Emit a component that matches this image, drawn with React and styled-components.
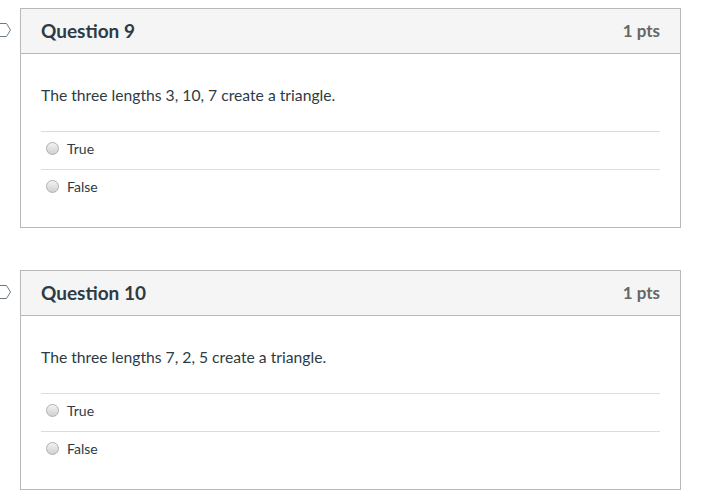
import React from 'react';
import styled, { createGlobalStyle } from 'styled-components';

const GlobalStyle = createGlobalStyle`
  html, body {
    margin: 0;
    padding: 0;
    background: #fff;
    font-family: Lato, "Open Sans", sans-serif;
    color: #2d3b45;
  }
`;

const Page = styled.div`
  padding: 8px 20px 0 20px;
  width: 661px;
  display: flex;
  flex-direction: column;
  gap: 42px;
`;

const QuestionWrap = styled.div`
  position: relative;
`;

// flag marker peeking in from the left edge
const FlagIcon = styled.svg`
  position: absolute;
  left: -20px;
  top: 14px;
`;

const Card = styled.div`
  border: 1px solid #b8b8b8;
  background: #fff;
`;

const Header = styled.div`
  display: flex;
  align-items: center;
  justify-content: space-between;
  height: 44px;
  padding: 0 20px;
  background: #f5f5f5;
  border-bottom: 1px solid #b8b8b8;
`;

const Title = styled.div`
  font-size: 19px;
  line-height: 24px;
  font-weight: 700;
  color: #2d3b45;
`;

const Points = styled.div`
  font-size: 17px;
  line-height: 22px;
  font-weight: 700;
  color: #666;
`;

const Body = styled.div`
  padding: 30px 20px 20px 20px;
`;

const Prompt = styled.div`
  font-size: 15.7px;
  line-height: 22px;
  margin-bottom: 25px;
`;

const Answer = styled.label`
  display: flex;
  align-items: center;
  box-sizing: border-box;
  height: 38px;
  border-top: 1px solid #dcdcdc;
  padding-left: 5px;
  padding-bottom: 4px;
  font-size: 14px;
  color: #2d3b45;
`;

const Radio = styled.span`
  width: 11px;
  height: 11px;
  border-radius: 50%;
  border: 1px solid #b0b0b0;
  background: linear-gradient(#f2f2f2, #d0d0d0);
  margin-right: 8px;
`;

const questions = [
  { n: 9, text: 'The three lengths 3, 10, 7 create a triangle.' },
  { n: 10, text: 'The three lengths 7, 2, 5 create a triangle.' },
];

const App = () => (
  <>
    <GlobalStyle />
    <Page>
      {questions.map(q => (
        <QuestionWrap key={q.n}>
          <FlagIcon width="14" height="16" viewBox="0 0 14 16">
            <path d="M-4 1.5 H6.5 L10.5 8 L6.5 14.5 H-4" fill="none" stroke="#6b7b88" strokeWidth="1" />
          </FlagIcon>
          <Card>
            <Header>
              <Title>Question {q.n}</Title>
              <Points>1 pts</Points>
            </Header>
            <Body>
              <Prompt>{q.text}</Prompt>
              <Answer><Radio />True</Answer>
              <Answer><Radio />False</Answer>
            </Body>
          </Card>
        </QuestionWrap>
      ))}
    </Page>
  </>
);

export default App;
